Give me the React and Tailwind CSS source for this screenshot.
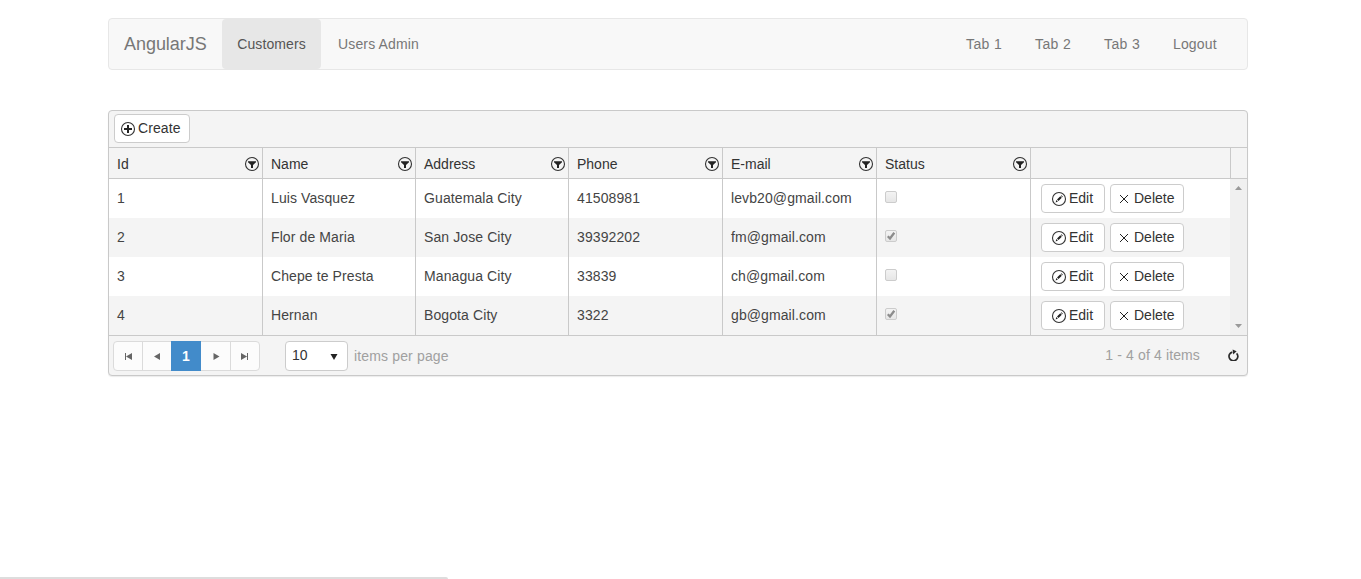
import React from "react";

const columns = ["Id", "Name", "Address", "Phone", "E-mail", "Status"];

const rows = [
  ["1", "Luis Vasquez", "Guatemala City", "41508981", "levb20@gmail.com", false],
  ["2", "Flor de Maria", "San Jose City", "39392202", "fm@gmail.com", true],
  ["3", "Chepe te Presta", "Managua City", "33839", "ch@gmail.com", false],
  ["4", "Hernan", "Bogota City", "3322", "gb@gmail.com", true],
];

const grid = "grid grid-cols-[153px_153px_153px_154px_154px_154px_200px_17px]";

function Circle({ children }) {
  return (
    <svg className="h-4 w-4 shrink-0" viewBox="0 0 16 16" fill="none">
      <circle cx="8" cy="8" r="6.5" stroke="#333" strokeWidth="1.1" />
      {children}
    </svg>
  );
}

function FilterIcon() {
  return (
    <Circle>
      <path d="M4 5.3h8v1L9 9v3H7V9L4 6.3z" fill="#222" />
    </Circle>
  );
}

function PlusIcon() {
  return (
    <Circle>
      <path d="M7 4h2v3h3v2H9v3H7V9H4V7h3z" fill="#222" />
    </Circle>
  );
}

function PencilIcon() {
  return (
    <Circle>
      <path d="M4.6 11.4l.8-2.3 1.5 1.5zM6 8.6l3.3-3.3 1.5 1.5-3.3 3.3zM9.8 4.8l.6-.6 1.5 1.5-.6.6z" fill="#222" />
    </Circle>
  );
}

function CrossIcon() {
  return (
    <svg className="h-4 w-4 shrink-0" viewBox="0 0 16 16" fill="none">
      <path d="M4 4l8 8M12 4l-8 8" stroke="#222" strokeWidth="1" />
    </svg>
  );
}

function Check({ checked }) {
  return (
    <span className="mt-3 block h-3 w-3 rounded-[2px] border border-[#ccc] bg-linear-to-b from-[#f3f3f3] to-[#e6e6e6]">
      {checked && (
        <svg className="block h-[10px] w-[10px]" viewBox="0 0 10 10" fill="none">
          <path d="M1.8 5.2l2.2 2.3L8.3 1.8" stroke="#8c8c8c" strokeWidth="2.3" />
        </svg>
      )}
    </span>
  );
}

function Button({ className, children }) {
  return (
    <button className={"flex h-[29px] items-center rounded-[4px] border border-[#ccc] bg-white leading-5 text-[#333] " + className}>
      {children}
    </button>
  );
}

function PageButton({ className, path }) {
  return (
    <span className={"flex h-full items-center justify-center border-[#dbdbdb] " + className}>
      <svg className="h-[10px] w-[10px]" viewBox="0 0 10 10">
        <path d={path} fill="#666" />
      </svg>
    </span>
  );
}

export default function App() {
  return (
    <div className="flex h-[579px] flex-col justify-between bg-white font-['Liberation_Sans',Arial,sans-serif] text-[14px] leading-5 text-[#444]">
      <main className="ml-[108px] w-[1140px] pt-[18px]">
        <nav className="flex h-[52px] rounded-[4px] border border-[#e7e7e7] bg-[#f8f8f8] text-[#777]">
          <a className="flex w-[113px] items-center pl-[15px] text-[18px] tracking-[-0.05px]">AngularJS</a>
          <a className="flex w-[99px] items-center justify-center rounded-[4px] bg-[#e7e7e7] tracking-[0.1px] text-[#555]">Customers</a>
          <a className="flex items-center pl-[17px] tracking-[0.15px]">Users Admin</a>
          <div className="ml-auto flex items-center pr-[29px]">
            <a className="w-[69px] tracking-[0.4px]">Tab 1</a>
            <a className="w-[69px] tracking-[0.4px]">Tab 2</a>
            <a className="w-[69px] tracking-[0.4px]">Tab 3</a>
            <a className="w-[45px] tracking-[0.15px]">Logout</a>
          </div>
        </nav>

        <section className="mt-10 h-[266px] rounded-[4px] border border-[#c9c9c9] bg-[#f4f4f4] shadow-[0_1px_1px_rgba(0,0,0,0.08)]">
          <div className="h-[37px] border-b border-[#c9c9c9] pt-[3px] pl-[5px]">
            <Button className="w-[76px] gap-[2px] pl-[5px]">
              <PlusIcon />
              <span className="pb-[2px] tracking-[0.1px]">Create</span>
            </Button>
          </div>

          <div className={grid + " h-[31px] border-b border-[#c9c9c9] text-[#333]"}>
            {columns.map((name, i) => (
              <div key={name} className={"flex items-center justify-between pt-[2px] pr-[2px] pl-2 " + (i ? "border-l border-[#c9c9c9]" : "")}>
                {name}
                <FilterIcon />
              </div>
            ))}
            <div className="border-l border-[#c9c9c9]" />
            <div className="border-l border-[#c9c9c9]" />
          </div>

          <div className="flex h-[157px] border-b border-[#c9c9c9]">
            <div className="w-[1121px]">
              {rows.map((row, r) => (
                <div key={row[0]} className={"grid h-[39px] grid-cols-[153px_153px_153px_154px_154px_154px_200px] " + (r % 2 ? "bg-[#f4f4f4]" : "bg-white")}>
                  {row.map((value, i) => (
                    <div key={i} className={"pl-2 " + (i ? "border-l border-[#c9c9c9]" : "")}>
                      {typeof value === "boolean" ? <Check checked={value} /> : <span className="block pt-[9px] tracking-[0.1px]">{value}</span>}
                    </div>
                  ))}
                  <div className="flex gap-[5px] border-l border-[#c9c9c9] pt-[5px] pl-[10px]">
                    <Button className="w-16 gap-[2px] pl-[9px]">
                      <PencilIcon />
                      <span className="pb-[2px]">Edit</span>
                    </Button>
                    <Button className="w-[74px] gap-[2px] pl-[5px]">
                      <CrossIcon />
                      <span className="pb-[2px]">Delete</span>
                    </Button>
                  </div>
                </div>
              ))}
            </div>
            <div className="flex w-[17px] flex-col items-center justify-between bg-[#f0f0f0] pt-[7px] pr-px pb-[7px]">
              <svg className="h-1 w-[7px]" viewBox="0 0 7 4"><path d="M3.5 0L7 4H0z" fill="#999" /></svg>
              <svg className="h-1 w-[7px]" viewBox="0 0 7 4"><path d="M0 0h7L3.5 4z" fill="#999" /></svg>
            </div>
          </div>

          <footer className="flex h-[39px] items-center pt-[1px] pl-1 text-[#a0a0a0]">
            <div className="flex h-[30px] w-[147px] rounded-[4px] border border-[#dbdbdb] bg-[#fcfcfc]">
              <PageButton className="w-[29px] border-r" path="M2 2h1v7H2zM9 2v7L3 5.5z" />
              <PageButton className="w-7" path="M8 2v7L2 5.5z" />
              <span className="-my-px flex w-[30px] items-center justify-center bg-[#428bca] font-bold text-white">1</span>
              <PageButton className="w-[30px] border-r" path="M2.5 2v7l6-3.5z" />
              <PageButton className="w-7" path="M1 2v7l6-3.5zM7 2h1v7H7z" />
            </div>
            <div className="ml-[25px] flex h-[30px] w-[63px] items-center justify-between rounded-[4px] border border-[#ccc] bg-white pr-[9px] pl-[6px] text-[#333]">
              <span className="pb-[2px]">10</span>
              <svg className="mt-[2px] h-[6px] w-[8px]" viewBox="0 0 8 6"><path d="M.5 0h7L4 6z" fill="#222" /></svg>
            </div>
            <span className="ml-[6px] tracking-[0.15px]">items per page</span>
            <span className="ml-auto pb-[2px] tracking-[0.13px]">1 - 4 of 4 items</span>
            <svg className="mr-[8px] mb-[2px] ml-[27px] h-3 w-3" viewBox="0 0 12 12" fill="none">
              <path d="M9.3 4A4.4 4.4 0 1 1 5 2.8" stroke="#2b2b2b" strokeWidth="1.7" transform="translate(.3 .3)" />
              <path d="M5.6 0.4L9.6 2.2 6.2 5.4z" fill="#2b2b2b" />
            </svg>
          </footer>
        </section>
      </main>
      <div className="h-[2px] w-[448px] rounded-tr-[2px] bg-[#ddd]" />
    </div>
  );
}
